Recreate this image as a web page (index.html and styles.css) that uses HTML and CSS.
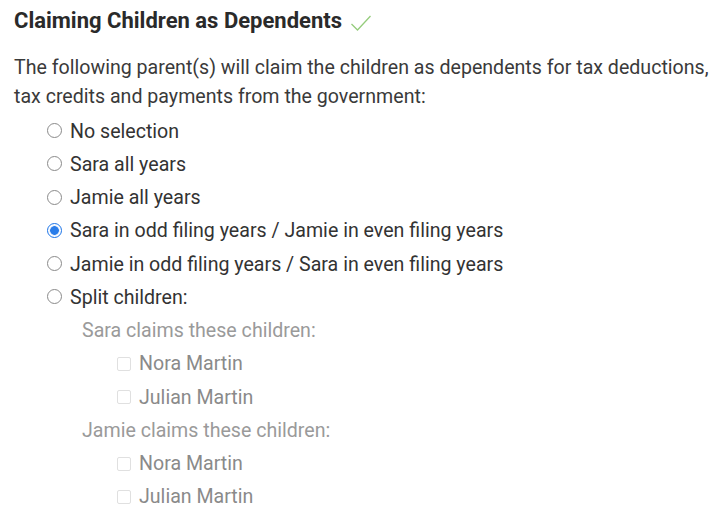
FILE: index.html
```html
<!DOCTYPE html>
<html>
<head>
<meta charset="utf-8">
<link rel="stylesheet" href="styles.css">
</head>
<body>
<div class="page">
  <h1 class="title">Claiming Children as Dependents
    <svg class="check" width="22" height="18" viewBox="0 0 22 18"><path d="M1.5 10 L7.5 16 L20.5 2" fill="none" stroke="#95cc7c" stroke-width="1.3"/></svg>
  </h1>
  <p class="intro">The following parent(s) will claim the children as dependents for tax deductions, tax credits and payments from the government:</p>
  <ul class="options">
    <li class="opt"><span class="radio"></span>No selection</li>
    <li class="opt"><span class="radio"></span>Sara all years</li>
    <li class="opt"><span class="radio"></span>Jamie all years</li>
    <li class="opt"><span class="radio on"></span>Sara in odd filing years / Jamie in even filing years</li>
    <li class="opt"><span class="radio"></span>Jamie in odd filing years / Sara in even filing years</li>
    <li class="opt"><span class="radio"></span>Split children:</li>
    <li class="sub">Sara claims these children:</li>
    <li class="kid"><span class="box"></span>Nora Martin</li>
    <li class="kid"><span class="box"></span>Julian Martin</li>
    <li class="sub">Jamie claims these children:</li>
    <li class="kid"><span class="box"></span>Nora Martin</li>
    <li class="kid"><span class="box"></span>Julian Martin</li>
  </ul>
</div>
</body>
</html>
```
FILE: styles.css
```css
html, body { margin: 0; padding: 0; background: #fff; }
body { font-family: Roboto, "Liberation Sans", sans-serif; color: #333; }
.page { padding: 8px 0 0 14px; width: 706px; }
.title { margin: 0; font-size: 22px; font-weight: 700; color: #2a2a2a; line-height: 26px; display: flex; align-items: center; gap: 8px; }
.check { margin-top: 3px; }
.intro { margin: 18.5px 0 0 0; font-size: 19.6px; line-height: 29px; color: #3a3a3a; }
.options { list-style: none; margin: 4px 0 0 0; padding: 0; }
.options li { height: 33.25px; display: flex; align-items: center; font-size: 19.6px; }
.opt { padding-left: 33px; color: #333; }
.radio { width: 13px; height: 13px; border: 1px solid #8a8a8a; border-radius: 50%; margin-right: 8px; margin-top: -1px; flex: none; background: #fff; }
.radio.on { border-color: #1a73e8; background: radial-gradient(circle, #2a7de9 0 4px, #d7e6fb 4.6px, #fff 5.5px); }
.sub { padding-left: 68px; color: #9a9a9a; }
.kid { padding-left: 103px; color: #8a8a8a; }
.box { width: 12px; height: 12px; border: 1px solid #e0e0e0; border-radius: 2px; margin-right: 8px; flex: none; }
```
